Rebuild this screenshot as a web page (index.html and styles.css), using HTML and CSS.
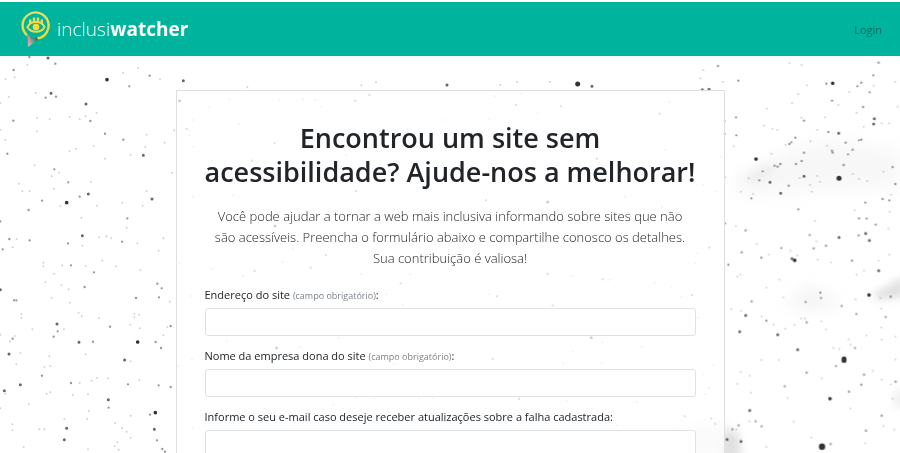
FILE: index.html
```html
<!DOCTYPE html>
<html lang="pt-BR">
<head>
<meta charset="utf-8">
<meta name="viewport" content="width=device-width, initial-scale=1">
<title>inclusiwatcher</title>
<link rel="stylesheet" href="styles.css">
</head>
<body>
<svg class="sky" viewBox="0 0 900 453" preserveAspectRatio="xMidYMin slice" aria-hidden="true">
  <defs>
    <filter id="haze" x="-50%" y="-50%" width="200%" height="200%"><feGaussianBlur stdDeviation="8"/></filter>
    <filter id="wisp" x="-50%" y="-50%" width="200%" height="200%"><feGaussianBlur stdDeviation="4"/></filter>
  </defs>
  <g class="haze" filter="url(#haze)">
    <path opacity=".2" d="M728 180L755 165L800 145L840 139L875 147L900 150V188L850 190L790 193L745 196Z"/>
    <path opacity=".3" d="M785 308L807 285L842 302L828 310Z"/>
    <path opacity=".4" d="M610 450L680 430L725 422V460H600Z"/>
  </g>
  <g class="haze" filter="url(#wisp)">
    <path opacity=".3" d="M745 176L770 164L778 169L755 184Z"/>
    <path opacity=".8" d="M872 294L888 286L905 275V297L878 300Z"/>
    <path opacity=".8" d="M724 430L738 432L742 460H720Z"/>
    <path opacity=".4" d="M893 393L905 388V408H895Z"/>
  </g>
  <g class="stars" transform="translate(700 0) scale(.33333)">
    <path class="s5" d="M417 535h0"/>
    <path class="s4" d="M398 250h0M168 477h0"/>
    <path class="s3" d="M523 356h0M416 400h0M312 529h0M242 580h0M210 547h0M7 269h0M27 268h0M521 372h0"/>
    <path class="s2" d="M396 452h0M398 458h0M536 188h0M520 226h0M484 248h0M472 259h0M509 277h0M489 321h0M396 302h0M312 362h0M108 352h0M109 406h0M274 427h0M268 432h0M312 458h0M305 483h0M288 492h0M241 492h0M233 500h0M224 497h0M188 514h0M178 541h0M154 595h0M266 557h0M431 495h0M458 449h0M444 463h0M484 419h0M477 421h0M548 597h0M568 601h0M496 608h0M578 501h0M586 552h0M295 628h0M73 363h0M73 402h0M115 242h0M54 198h0M477 655h0M500 656h0M75 670h0M527 674h0M379 251h0M286 413h0M437 428h0M385 396h0"/>
    <path class="s1" d="M276 309h0M295 282h0M321 256h0M269 190h0M305 195h0M192 377h0M217 386h0M232 390h0M201 326h0M375 352h0M415 315h0M470 338h0M491 380h0M545 370h0M593 320h0M586 246h0M448 276h0M69 246h0M1 235h0M101 439h0M76 532h0M214 461h0M146 535h0M299 534h0M352 528h0M360 545h0M330 555h0M335 575h0M458 522h0M477 537h0M502 543h0M550 515h0M573 584h0M464 631h0M345 663h0M159 581h0M122 575h0M331 424h0M352 390h0M567 370h0M569 635h0M10 210h0M521 257h0M257 434h0M304 353h0M381 437h0M108 679h0"/>
  </g>
  <g class="stars" transform="translate(700 227) scale(.33333)">
    <path class="s6" d="M366 659h0"/>
    <path class="s5" d="M432 396h0M432 400h0"/>
    <path class="s4" d="M284 100h0M390 515h0M507 204h0"/>
    <path class="s3" d="M417 31h0M508 40h0M276 95h0M497 19h0M536 131h0M233 323h0M293 368h0M137 265h0M119 314h0M81 637h0M123 643h0M149 550h0"/>
    <path class="s2" d="M137 10h0M329 24h0M476 25h0M341 64h0M378 56h0M244 63h0M125 76h0M184 92h0M85 113h0M456 101h0M361 197h0M363 213h0M317 225h0M425 237h0M155 223h0M199 281h0M320 286h0M469 261h0M557 270h0M572 209h0M408 417h0M465 363h0M492 443h0M587 464h0M320 437h0M254 478h0M447 494h0M484 473h0M545 566h0M498 611h0M167 583h0M185 598h0M116 595h0M97 607h0M392 651h0"/>
    <path class="s1" d="M170 51h0M206 82h0M271 71h0M292 85h0M349 43h0M353 97h0M393 106h0M470 143h0M492 132h0M536 101h0M121 143h0M112 148h0M238 157h0M199 182h0M250 211h0M94 246h0M123 252h0M185 268h0M221 293h0M256 305h0M284 293h0M303 274h0M314 274h0M364 283h0M378 307h0M446 337h0M451 352h0M499 325h0M544 301h0M545 337h0M586 329h0M400 363h0M418 366h0M236 399h0M184 399h0M122 435h0M149 446h0M112 470h0M153 497h0M263 513h0M365 454h0M518 432h0M545 457h0M572 472h0M586 397h0M578 515h0M451 544h0M550 597h0M583 608h0M281 584h0M334 631h0M199 660h0M495 649h0M109 607h0M148 583h0M467 217h0M541 213h0M568 83h0M565 5h0M28 62h0M544 245h0"/>
  </g>
  <g class="stars" transform="translate(0 56) scale(.33333)">
    <path class="s4" d="M321 71h0M200 440h0"/>
    <path class="s3" d="M153 112h0M258 144h0M247 539h0M456 429h0M430 298h0M265 414h0M144 6h0"/>
    <path class="s2" d="M168 122h0M137 125h0M40 194h0M22 293h0M271 195h0M315 233h0M370 251h0M449 59h0M163 340h0M239 422h0M86 462h0M89 553h0M204 562h0M366 557h0M382 487h0M1 496h0M126 434h0M8 580h0M28 549h0M205 379h0M388 91h0M166 23h0M88 3h0M41 42h0"/>
    <path class="s1" d="M82 26h0M44 64h0M17 70h0M27 122h0M1 142h0M107 111h0M111 185h0M149 190h0M111 226h0M209 183h0M239 190h0M257 181h0M290 170h0M369 51h0M414 36h0M480 70h0M523 223h0M494 260h0M440 236h0M436 273h0M392 297h0M315 308h0M281 270h0M228 278h0M209 286h0M16 251h0M1 221h0M104 328h0M155 361h0M177 350h0M162 398h0M57 383h0M67 405h0M89 405h0M273 377h0M181 450h0M291 449h0M244 485h0M367 440h0M440 405h0M428 449h0M516 350h0M490 547h0M476 584h0M334 547h0M319 541h0M297 544h0M247 569h0M50 550h0M38 574h0M412 562h0M380 515h0"/>
  </g>
  <g class="stars" transform="translate(0 256) scale(.33333)">
    <path class="s4" d="M413 258h0M466 470h0"/>
    <path class="s3" d="M1 101h0M237 259h0M171 204h0M200 517h0M325 431h0M463 520h0M374 312h0M193 551h0M13 404h0M61 386h0M27 294h0"/>
    <path class="s2" d="M282 49h0M213 28h0M254 93h0M161 242h0M408 126h0M472 83h0M485 97h0M477 124h0M512 210h0M483 276h0M467 258h0M330 212h0M279 257h0M126 359h0M213 381h0M326 455h0M384 385h0M450 476h0M471 553h0M487 579h0M495 587h0M512 393h0M476 388h0M42 133h0M49 133h0M38 248h0M173 226h0"/>
    <path class="s1" d="M130 20h0M130 31h0M187 28h0M257 30h0M307 14h0M348 31h0M421 42h0M162 53h0M184 87h0M206 100h0M136 79h0M155 126h0M210 140h0M64 174h0M64 185h0M236 170h0M245 181h0M297 187h0M403 173h0M403 184h0M417 176h0M391 206h0M419 217h0M509 137h0M490 238h0M502 213h0M192 220h0M97 220h0M1 236h0M30 256h0M44 240h0M61 290h0M49 325h0M148 301h0M257 295h0M392 316h0M133 334h0M151 330h0M291 366h0M324 367h0M275 374h0M239 381h0M418 373h0M140 413h0M151 409h0M219 417h0M264 415h0M86 445h0M1 457h0M16 413h0M267 465h0M193 490h0M261 489h0M37 505h0M37 523h0M118 520h0M133 520h0M71 574h0M264 580h0M345 501h0M366 516h0M380 527h0M392 545h0M344 571h0M356 581h0M352 559h0M392 479h0"/>
  </g>
  <g class="stars" transform="translate(176 80) scale(.33333)">
    <path class="s5" d="M1205 12h0"/>
    <path class="s3" d="M813 15h0M11 62h0M297 438h0M1115 366h0M302 804h0M1246 773h0M1248 19h0M22 2h0"/>
    <path class="s2" d="M580 45h0M538 62h0M32 147h0M295 190h0M236 573h0M450 525h0M1155 79h0M1020 75h0M1451 101h0M1600 502h0M1263 236h0M930 361h0M228 242h0M540 333h0M674 610h0M963 649h0M950 837h0M1029 957h0M1526 1009h0M1606 1015h0M1618 1031h0M1548 645h0M1280 598h0M1115 582h0M1130 677h0M404 563h0"/>
    <path class="s1" d="M310 61h0M382 58h0M418 59h0M433 80h0M100 82h0M160 57h0M214 22h0M188 132h0M50 120h0M40 166h0M50 200h0M556 16h0M600 6h0M973 15h0M1023 6h0M1122 6h0M1036 41h0M958 49h0M1085 100h0M940 118h0M1468 210h0M1480 65h0M1634 230h0M1582 314h0M1622 335h0M1562 520h0M1558 550h0M1458 381h0M1347 350h0M1157 212h0M1264 190h0M50 350h0M170 345h0M350 508h0M320 545h0M200 588h0M108 568h0M10 550h0M555 583h0M703 583h0M1188 588h0M1300 599h0M1436 609h0M1487 620h0M1516 651h0M940 643h0M1567 713h0M1397 800h0M1191 815h0M1277 850h0M1162 850h0M1279 787h0M1611 856h0M1582 883h0M1599 924h0M1588 942h0M1173 964h0M1382 967h0M1324 1036h0M1514 1052h0M152 784h0M371 800h0M48 838h0M8 858h0M488 774h0M540 953h0M595 955h0M472 974h0M267 986h0M50 1045h0M730 955h0M772 955h0M653 852h0M680 674h0M630 643h0M46 648h0M800 120h0M660 250h0M510 225h0"/>
  </g>
</svg>

<header class="topbar">
  <a class="brand" href="#">
    <svg class="brand-mark" viewBox="0 0 30 38" aria-hidden="true">
      <defs>
        <linearGradient id="gold" x1="0" y1="0" x2="0" y2="1"><stop offset="0" stop-color="#e2df6b"/><stop offset="1" stop-color="#ffd51f"/></linearGradient>
        <linearGradient id="tail" gradientUnits="userSpaceOnUse" x1="8" y1="35" x2="17" y2="28"><stop offset="0" stop-color="#a9cfc3"/><stop offset="1" stop-color="#176a5c"/></linearGradient>
        <linearGradient id="tip" x1="0" y1="0" x2="0" y2="1"><stop offset="0" stop-color="#ff6475"/><stop offset="1" stop-color="#c9b5b3"/></linearGradient>
      </defs>
      <path d="M6.2 25.4A13 13 0 1 1 16 28.4" fill="none" stroke="url(#gold)" stroke-width="2.4"/>
      <path d="M7 37V31L12 27.5H16L17 29.8Z" fill="url(#tail)"/>
      <path d="M6 23.5L9.5 27.5V33.5L7 37Z" fill="url(#tip)"/>
      <path d="M6.4 17C10 10.4 20 10.4 23.6 17C20 23.4 10 23.4 6.4 17Z" fill="none" stroke="#f4d94b" stroke-width="1.9"/>
      <path d="M9.2 13.4V9.6M13 11.6V7.4M17 11.6V7.4M20.8 13.4V9.6" stroke="#ecdc58" stroke-width="2.4"/>
      <circle cx="15" cy="17" r="3.3" fill="#ffda32"/>
    </svg>
    <span class="brand-name">inclusi<b>watcher</b></span>
  </a>
  <nav><a class="login" href="#">Login</a></nav>
</header>

<main>
  <form class="card">
    <h1>Encontrou um site sem acessibilidade? Ajude-nos a melhorar!</h1>
    <p class="lead">Você pode ajudar a tornar a web mais inclusiva informando sobre sites que não são acessíveis. Preencha o formulário abaixo e compartilhe conosco os detalhes. Sua contribuição é valiosa!</p>
    <div class="field">
      <label for="site">Endereço do site <small>(campo obrigatório)</small>:</label>
      <input id="site" type="url" required>
    </div>
    <div class="field">
      <label for="empresa">Nome da empresa dona do site <small>(campo obrigatório)</small>:</label>
      <input id="empresa" type="text" required>
    </div>
    <div class="field">
      <label for="email">Informe o seu e-mail caso deseje receber atualizações sobre a falha cadastrada:</label>
      <input id="email" type="email">
    </div>
  </form>
</main>
</body>
</html>
```
FILE: styles.css
```css
* { box-sizing: border-box; }

body {
  margin: 0;
  padding-top: 2px;
  height: 100vh;
  overflow: hidden;
  position: relative;
  background: #fff;
  color: #212529;
  font-family: "Open Sans", "Noto Sans", sans-serif;
  font-size: 11px;
}

.sky {
  position: absolute;
  inset: 0;
  width: 100%;
  height: 100%;
  z-index: -1;
}

.haze { fill: #d8d8d8; }

.stars {
  fill: none;
  stroke: #333;
  stroke-linecap: round;
}

.s6 { stroke-width: 19; }
.s5 { stroke-width: 15; }
.s4 { stroke-width: 11; }
.s3 { stroke-width: 9; opacity: .75; }
.s2 { stroke-width: 7; opacity: .5; }
.s1 { stroke-width: 6; opacity: .22; }

.topbar {
  display: flex;
  align-items: center;
  justify-content: space-between;
  height: 54px;
  padding: 0 18px 0 21px;
  background: #00b39d;
}

.brand {
  display: flex;
  align-items: center;
  gap: 6px;
  color: #fff;
  text-decoration: none;
}

.brand-mark {
  width: 30px;
  height: 38px;
}

.brand-name {
  font-size: 19px;
  font-weight: 300;
  line-height: 24px;
}

.brand-name b { font-weight: 700; }

.login {
  color: #086b60;
  font-size: 11px;
  text-decoration: none;
}

.card {
  width: 61%;
  margin: 34px auto 0;
  padding: 30px 28px;
  border: 1px solid #dfdfdf;
  background: rgba(255, 255, 255, .7);
}

h1 {
  margin: 0 -2px 17px;
  font-size: 27px;
  font-weight: 600;
  line-height: 34px;
  text-align: center;
}

.lead {
  margin: 0 0 18px;
  padding: 0 5px;
  font-size: 13px;
  font-weight: 300;
  line-height: 21px;
  text-align: center;
}

.field { margin-bottom: 12px; }

label {
  display: block;
  margin-bottom: 5px;
  line-height: 16px;
}

small {
  color: #7b8288;
  font-size: 9px;
  line-height: 1;
}

input {
  display: block;
  width: 100%;
  height: 28px;
  padding: 4px 10px;
  border: 1px solid #dee2e6;
  border-radius: 3px;
  background: #fff;
  font: inherit;
}
```
